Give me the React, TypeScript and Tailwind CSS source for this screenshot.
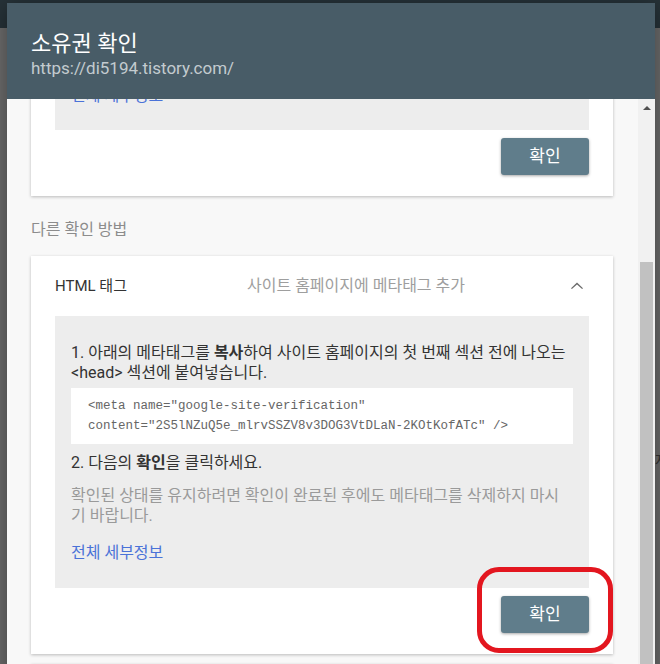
const font = "font-['Roboto','Noto_Sans_CJK_KR',sans-serif]";

function ConfirmButton() {
  return (
    <div className="flex justify-end">
      <button className="h-[37px] w-[88px] rounded-[3px] bg-[#607d8b] text-[17px] text-white shadow-[0_1px_3px_rgba(0,0,0,0.35)]">
        확인
      </button>
    </div>
  );
}

function ExpandLess() {
  return (
    <svg viewBox="0 0 24 24" className="h-[24px] w-[24px] fill-[#6b6b6b]">
      <path d="M12 8.6l-6 5.6 0.9 0.9L12 10.4l5.1 4.7 0.9-0.9z" />
    </svg>
  );
}

export default function App() {
  return (
    <div className={`relative h-[664px] w-[660px] overflow-hidden bg-[#6c6c6c] ${font}`}>
      <div className="h-[28px] bg-[#263238]" />
      <div className="absolute left-[655px] top-[450px] text-[14px] text-[#333]">자</div>

      {/* dialog */}
      <div className="absolute left-[7px] top-[3px] flex h-[700px] w-[648px] flex-col bg-[#f8f8f8] shadow-[0_4px_20px_rgba(0,0,0,0.4)]">
        <div className="relative z-10 h-[96px] shrink-0 bg-[#485c67] px-[24px] pt-[27px]">
          <div className="text-[22px] leading-[28px] text-white">소유권 확인</div>
          <div className="text-[17px] leading-[20px] text-[#c3cbcf]">https://di5194.tistory.com/</div>
        </div>

        <div className="flex min-h-0 flex-1">
          <div className="flex-1 overflow-hidden pl-[24px] pr-[25px]">
            {/* first card, scrolled */}
            <div className="bg-white px-[24px] pb-[21px] shadow-[0_1px_3px_rgba(0,0,0,0.25)]">
              <div className="bg-[#ededed] px-[16px] pb-[24px]">
                <div className="-mt-[13px] text-[16px] leading-[20px] text-[#4a72d8]">전체 세부정보</div>
              </div>
              <div className="mt-[8px]">
                <ConfirmButton />
              </div>
            </div>

            <div className="mb-[16px] mt-[24px] text-[16px] leading-[20px] text-[#8c8c8c]">다른 확인 방법</div>

            {/* HTML tag card */}
            <div className="bg-white px-[24px] pb-[21px] shadow-[0_1px_3px_rgba(0,0,0,0.25)]">
              <div className="flex h-[60px] items-center">
                <div className="w-[192px] text-[15px] text-[#333]">HTML 태그</div>
                <div className="flex-1 text-[16px] text-[#9e9e9e]">사이트 홈페이지에 메타태그 추가</div>
                <ExpandLess />
              </div>

              <div className="bg-[#ededed] px-[16px] pb-[25px] pt-[27px] text-[16px] leading-[20px]">
                <p className="text-[#333]">
                  1. 아래의 메타태그를 <b>복사</b>하여 사이트 홈페이지의 첫 번째 섹션 전에 나오는 &lt;head&gt; 섹션에 붙여넣습니다.
                </p>
                <div className="mt-[5px] bg-white py-[8px] pl-[17px] font-['Liberation_Mono',monospace] text-[12.5px] leading-[20px] text-[#666]">
                  <div>&lt;meta name="google-site-verification"</div>
                  <div>content="2S5lNZuQ5e_mlrvSSZV8v3DOG3VtDLaN-2KOtKofATc" /&gt;</div>
                </div>
                <p className="mt-[9px] text-[#333]">
                  2. 다음의 <b>확인</b>을 클릭하세요.
                </p>
                <p className="mt-[13px] text-[#9a9a9a]">
                  확인된 상태를 유지하려면 확인이 완료된 후에도 메타태그를 삭제하지 마시기 바랍니다.
                </p>
                <div className="mt-[17px] text-[#4a72d8]">전체 세부정보</div>
              </div>

              <div className="mt-[8px]">
                <ConfirmButton />
              </div>
            </div>

            <div className="mt-[10px] h-[40px] bg-white shadow-[0_1px_3px_rgba(0,0,0,0.25)]" />
          </div>

          {/* scrollbar */}
          <div className="relative w-[17px] shrink-0 bg-[#f1f1f1]">
            <div className="flex h-[17px] items-center justify-center">
              <div className="h-0 w-0 border-x-[4px] border-b-[4px] border-x-transparent border-b-[#505050]" />
            </div>
            <div className="absolute left-[2px] top-[163px] h-[500px] w-[13px] bg-[#c1c1c1]" />
          </div>
        </div>
      </div>

      {/* annotation */}
      <div className="absolute left-[477px] top-[567px] h-[86px] w-[136px] rounded-[22px] border-[5px] border-[#e3161f]" />
    </div>
  );
}
